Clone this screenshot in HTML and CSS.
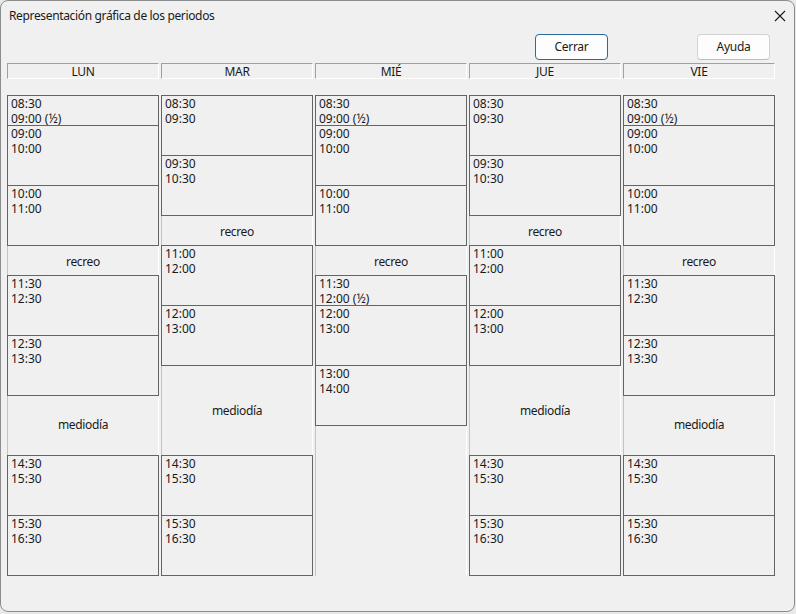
FILE: index.html
```html
<!DOCTYPE html>
<html lang="es">
<head>
<meta charset="utf-8">
<title>Representación gráfica de los periodos</title>
<link rel="stylesheet" href="styles.css">
</head>
<body>
<div class="window">
  <div class="titlebar">
    <span class="title">Representación gráfica de los periodos</span>
    <svg class="close" width="12" height="12" viewBox="0 0 12 12"><path d="M1 1 L11 11 M11 1 L1 11" stroke="#1a1a1a" stroke-width="1.1" fill="none"/></svg>
  </div>
  <div class="toolbar">
    <button class="btn primary">Cerrar</button>
    <button class="btn">Ayuda</button>
  </div>
  <div class="grid">
    <div class="day">
      <div class="head">LUN</div>
      <div class="slots">
        <div class="cell h30">08:30<br>09:00 (½)</div>
        <div class="cell h60">09:00<br>10:00</div>
        <div class="cell h60">10:00<br>11:00</div>
        <div class="brk b30">recreo</div>
        <div class="cell h60">11:30<br>12:30</div>
        <div class="cell h60">12:30<br>13:30</div>
        <div class="brk b60">mediodía</div>
        <div class="cell h60">14:30<br>15:30</div>
        <div class="cell h60">15:30<br>16:30</div>
      </div>
    </div>
    <div class="day">
      <div class="head">MAR</div>
      <div class="slots">
        <div class="cell h60">08:30<br>09:30</div>
        <div class="cell h60">09:30<br>10:30</div>
        <div class="brk b30">recreo</div>
        <div class="cell h60">11:00<br>12:00</div>
        <div class="cell h60">12:00<br>13:00</div>
        <div class="brk b90">mediodía</div>
        <div class="cell h60">14:30<br>15:30</div>
        <div class="cell h60">15:30<br>16:30</div>
      </div>
    </div>
    <div class="day">
      <div class="head">MIÉ</div>
      <div class="slots">
        <div class="cell h30">08:30<br>09:00 (½)</div>
        <div class="cell h60">09:00<br>10:00</div>
        <div class="cell h60">10:00<br>11:00</div>
        <div class="brk b30">recreo</div>
        <div class="cell h30">11:30<br>12:00 (½)</div>
        <div class="cell h60">12:00<br>13:00</div>
        <div class="cell h60">13:00<br>14:00</div>
      </div>
    </div>
    <div class="day">
      <div class="head">JUE</div>
      <div class="slots">
        <div class="cell h60">08:30<br>09:30</div>
        <div class="cell h60">09:30<br>10:30</div>
        <div class="brk b30">recreo</div>
        <div class="cell h60">11:00<br>12:00</div>
        <div class="cell h60">12:00<br>13:00</div>
        <div class="brk b90">mediodía</div>
        <div class="cell h60">14:30<br>15:30</div>
        <div class="cell h60">15:30<br>16:30</div>
      </div>
    </div>
    <div class="day">
      <div class="head">VIE</div>
      <div class="slots">
        <div class="cell h30">08:30<br>09:00 (½)</div>
        <div class="cell h60">09:00<br>10:00</div>
        <div class="cell h60">10:00<br>11:00</div>
        <div class="brk b30">recreo</div>
        <div class="cell h60">11:30<br>12:30</div>
        <div class="cell h60">12:30<br>13:30</div>
        <div class="brk b60">mediodía</div>
        <div class="cell h60">14:30<br>15:30</div>
        <div class="cell h60">15:30<br>16:30</div>
      </div>
    </div>
  </div>
</div>
</body>
</html>
```

FILE: styles.css
```css
* { box-sizing: border-box; }
html, body { margin: 0; padding: 0; }
body {
  width: 796px;
  height: 614px;
  background: #e9e9e9;
  font-family: "Noto Sans", "Open Sans", sans-serif;
  font-size: 12px;
  color: #1a1a1a;
  overflow: hidden;
}
.window {
  width: 795px;
  height: 612px;
  border: 1px solid #8c8c8c;
  border-radius: 8px;
  background: #f0f0f0;
  overflow: hidden;
}
.titlebar {
  height: 30px;
  display: flex;
  align-items: center;
  justify-content: space-between;
  padding: 0 8px 0 8px;
}
.title {
  line-height: 16px;
  letter-spacing: -0.35px;
}
.close {
  display: block;
}
.toolbar {
  display: flex;
  justify-content: flex-end;
  gap: 89px;
  padding-right: 24px;
  margin-top: 3px;
}
.btn {
  width: 73px;
  height: 26px;
  font-family: inherit;
  font-size: 12px;
  letter-spacing: -0.3px;
  color: #1a1a1a;
  background: #fdfdfd;
  border: 1px solid #d2d2d2;
  border-bottom-color: #bdbdbd;
  border-radius: 4px;
  padding: 0;
  line-height: 24px;
}
.btn.primary {
  border: 1px solid #2a6a9c;
}
.grid {
  display: flex;
  gap: 2px;
  padding-left: 6px;
  margin-top: 3px;
}
.day {
  width: 152px;
  display: flex;
  flex-direction: column;
}
.head {
  height: 16px;
  border-top: 1px solid #a0a0a0;
  border-left: 1px solid #a0a0a0;
  border-bottom: 1px solid #ffffff;
  border-right: 1px solid #ffffff;
  text-align: center;
  line-height: 14px;
  padding-top: 1px;
  letter-spacing: -0.3px;
}
.slots {
  margin-top: 16px;
  height: 481px;
  border-left: 1px solid #c4c4c4;
  border-right: 1px solid #ffffff;
  display: flex;
  flex-direction: column;
}
.cell {
  flex: none;
  margin: 0 -1px -1px;
  border: 1px solid #646464;
  padding: 0 0 0 3px;
  line-height: 15px;
  white-space: nowrap;
}
.h30 { height: 31px; }
.h60 { height: 61px; }
.brk {
  flex: none;
  display: flex;
  align-items: center;
  justify-content: center;
  line-height: 15px;
  padding-top: 2px;
  letter-spacing: -0.35px;
}
.b30 { height: 30px; }
.b60 { height: 60px; padding: 0 0 1px; }
.b90 { height: 90px; padding: 0; }
```
